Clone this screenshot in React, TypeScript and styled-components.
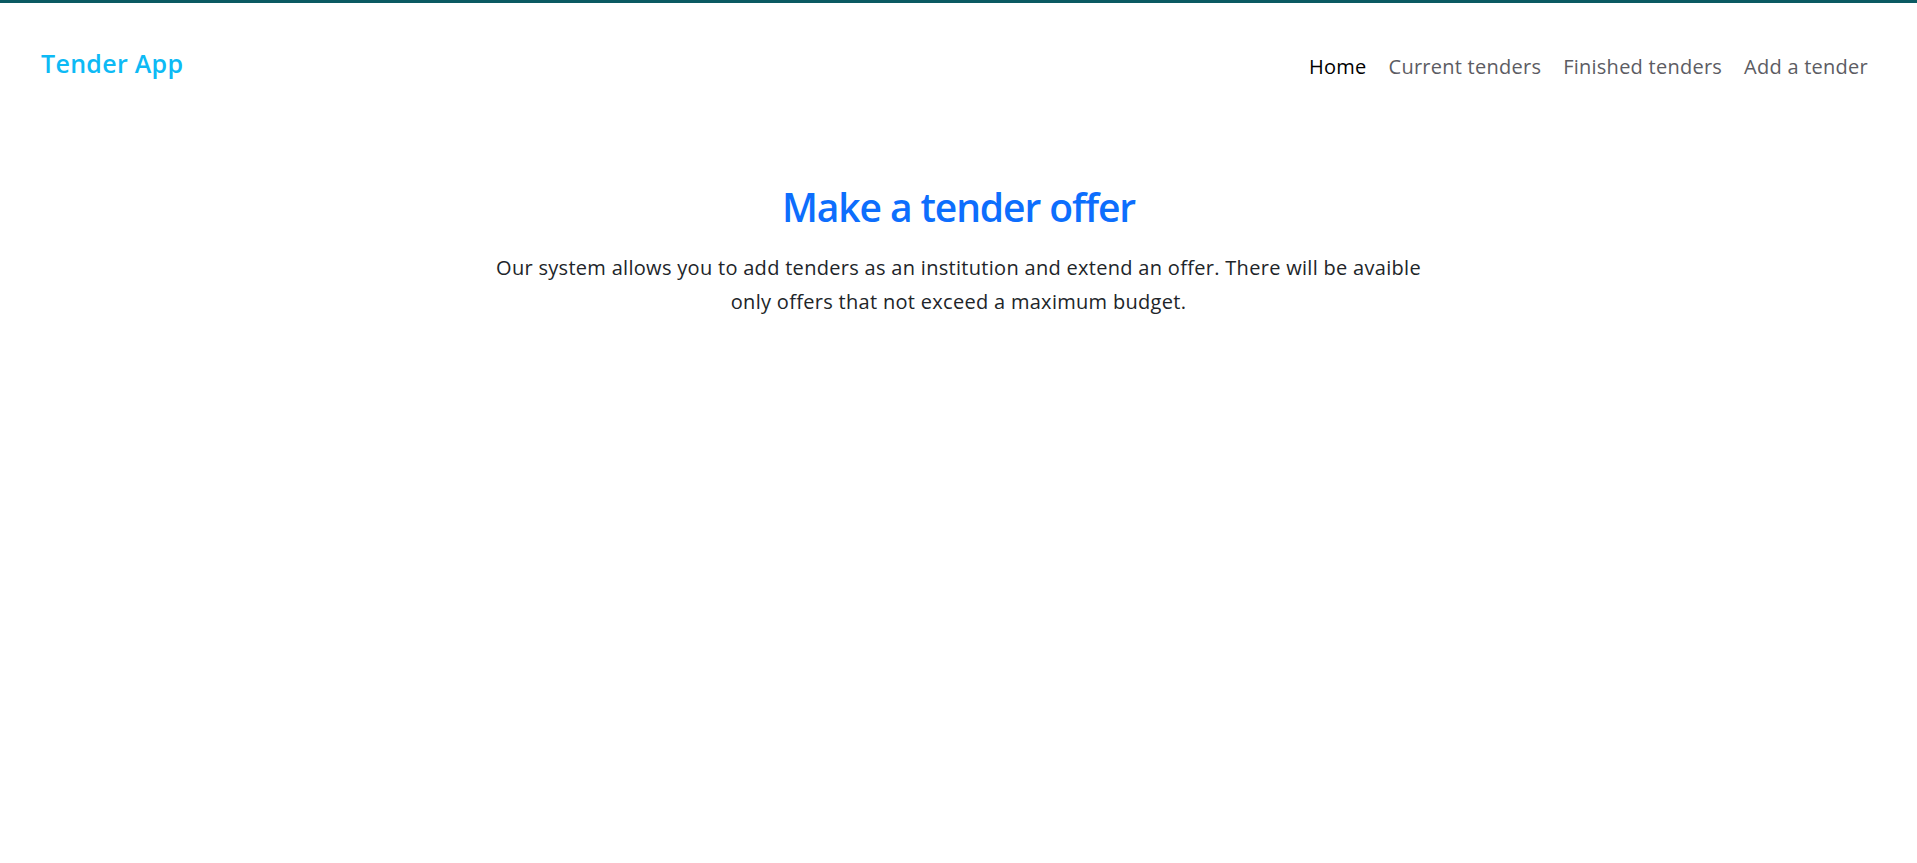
import React from "react";
import styled, { createGlobalStyle } from "styled-components";

const GlobalStyle = createGlobalStyle`
  html, body { margin: 0; padding: 0; background: #ffffff; }
  body {
    font-family: "Open Sans", "Noto Sans", sans-serif;
    color: #212529;
    border-top: 3px solid #0b5a62;
  }
  * { box-sizing: border-box; }
`;

const Navbar = styled.header`
  display: flex;
  align-items: center;
  justify-content: space-between;
  padding: 42px 39px 0 41px;
`;

const Brand = styled.a`
  font-size: 25px;
  font-weight: 600;
  line-height: 37px;
  letter-spacing: 0.3px;
  color: #0dbaf5;
  text-decoration: none;
`;

const NavList = styled.nav`
  display: flex;
  align-items: center;
  margin-top: 6px;
`;

const NavLink = styled.a<{ $active?: boolean }>`
  font-size: 20px;
  line-height: 30px;
  letter-spacing: 0.25px;
  padding: 0 11px;
  color: ${(p) => (p.$active ? "#000000" : "#5c5c63")};
  text-decoration: none;
  &:last-child { padding-right: 10px; }
`;

const Hero = styled.main`
  display: flex;
  flex-direction: column;
  align-items: center;
  padding-top: 101px;
`;

const Title = styled.h1`
  margin: 0 0 20px;
  font-size: 39px;
  font-weight: 600;
  line-height: 48px;
  letter-spacing: -1.1px;
  color: #0d6efd;
`;

const Lead = styled.p`
  margin: 0;
  max-width: 950px;
  text-align: center;
  font-size: 20px;
  line-height: 34px;
  letter-spacing: 0.3px;
  color: #212529;
`;

export default function App() {
  return (
    <>
      <GlobalStyle />
      <Navbar>
        <Brand href="#">Tender App</Brand>
        <NavList>
          <NavLink href="#" $active>Home</NavLink>
          <NavLink href="#">Current tenders</NavLink>
          <NavLink href="#">Finished tenders</NavLink>
          <NavLink href="#">Add a tender</NavLink>
        </NavList>
      </Navbar>
      <Hero>
        <Title>Make a tender offer</Title>
        <Lead>
          Our system allows you to add tenders as an institution and extend an offer. There will be avaible
          only offers that not exceed a maximum budget.
        </Lead>
      </Hero>
    </>
  );
}
